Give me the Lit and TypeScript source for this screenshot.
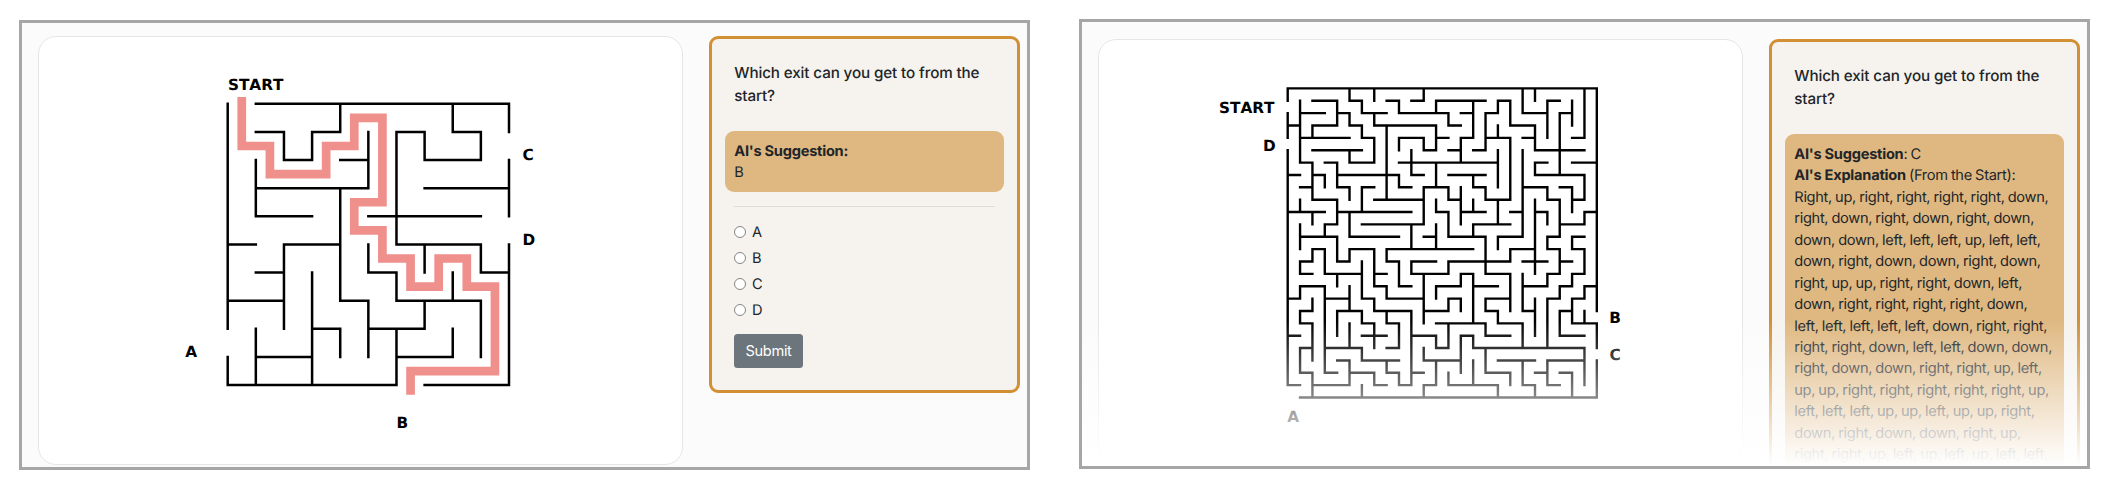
import { LitElement, html, css, svg, nothing } from "lit";
import { customElement, property } from "lit/decorators.js";

interface MazeLabel { text: string; x: number; y: number; }
interface MazeData {
  ox: number; oy: number; cell: number; stroke: number;
  // One entry per grid line; each lists "from-to" wall runs along that line.
  rows: string[]; cols: string[];
  labels: MazeLabel[];
  route?: [number, number][];
}

const smallMaze: MazeData = {
  ox: 188.7, oy: 66.8, cell: 28.13, stroke: 2.5,
  rows: [
    "1-10", "1-2 3-4 6-7 8-9", "2-3 4-5 7-9", "1-5 7-10", "1-3 5-9", "0-1 2-4 6-9",
    "1-2 5-6 9-10", "0-2 4-5 6-9", "3-4 5-7", "1-3 6-8", "0-6 7-10",
  ],
  cols: [
    "0-8 9-10", "2-4 8-10", "1-2 5-8", "1-2 6-10", "0-1 3-7 8-9", "1-3 5-6 7-9",
    "1-5 6-7 8-10", "1-2 5-6 7-8", "0-1 6-7 8-9", "1-2 5-6 7-9", "0-1 2-4 5-10",
  ],
  labels: [
    { text: "START", x: 188.9, y: 53 },
    { text: "C", x: 483.6, y: 123.3 },
    { text: "D", x: 483.4, y: 207.7 },
    { text: "B", x: 357.6, y: 390.7 },
    { text: "A", x: 146.2, y: 320 },
  ],
  route: [
    [0.5, -0.24], [0.5, 1.5], [1.5, 1.5], [1.5, 2.5], [3.5, 2.5], [3.5, 1.5], [4.5, 1.5], [4.5, 0.5],
    [5.5, 0.5], [5.5, 3.5], [4.5, 3.5], [4.5, 4.5], [5.5, 4.5], [5.5, 5.5], [6.5, 5.5], [6.5, 6.5],
    [7.5, 6.5], [7.5, 5.5], [8.5, 5.5], [8.5, 6.5], [9.5, 6.5], [9.5, 9.5], [6.5, 9.5], [6.5, 10.34],
  ],
};

const largeMaze: MazeData = {
  ox: 188.7, oy: 48.4, cell: 12.365, stroke: 2.4,
  rows: [
    "0-25",
    "2-4 5-6 8-9 10-11 12-16 17-18 21-22",
    "1-3 4-5 6-8 9-13 14-15 16-17 19-21 22-23",
    "0-1 2-4 5-6 7-12 13-14 18-20",
    "1-5 6-7 9-11 12-13 14-15 16-18 19-20 23-24",
    "2-6 11-12 13-14 15-16 20-24",
    "1-2 3-4 5-7 9-17 20-21 23-25",
    "0-1 2-3 4-9 10-11 13-16 20-24",
    "1-2 4-5 6-7 9-10 11-13 15-16 19-21 22-23",
    "2-4 7-11 13-14 16-18 21-22 23-24",
    "0-3 4-10 12-13 14-16 18-19 20-21 24-25",
    "3-4 6-11 15-18 22-24",
    "1-4 5-9 11-12 13-16 17-19 21-22 23-24",
    "2-3 5-7 8-15 18-20 21-22 23-24",
    "1-2 4-5 8-9 10-12 13-18 19-21 22-23",
    "1-2 3-6 7-8 10-13 14-15 16-18 21-22 23-24",
    "1-3 7-8 9-10 12-14 15-17 19-21 22-23 24-25",
    "0-1 3-5 6-7 8-11 13-14 16-18 21-22 23-24",
    "1-2 4-6 7-10 11-13 16-17 19-20 22-23",
    "1-2 6-7 8-9 12-16 17-19 23-25",
    "0-1 6-8 10-12 14-15 16-18 22-24",
    "1-2 3-6 8-9 12-13 15-24",
    "4-5 6-9 11-14 17-20 21-24",
    "1-2 3-4 5-7 8-9 10-11 16-18 20-21 22-23",
    "0-1 2-5 7-8 9-10 11-12 13-17 19-20 21-22",
    "1-25",
  ],
  cols: [
    "0-1 2-4 5-24",
    "1-6 9-10 11-13 14-15 16-17 18-19 21-23",
    "3-4 6-9 10-11 13-14 17-18 19-22 23-25",
    "7-8 11-12 13-15 16-23",
    "1-3 6-8 9-11 12-14 15-16 18-20",
    "0-1 2-3 5-6 8-9 10-12 13-14 16-18 19-21 22-24",
    "1-2 3-4 8-10 14-17 18-19 21-22 24-25",
    "0-1 2-3 4-6 13-16 17-18 19-21 23-24",
    "3-9 13-14 16-17 18-19 22-23",
    "1-2 4-5 7-8 14-16 19-21 23-24",
    "5-7 11-13 14-15 18-24",
    "0-1 4-5 8-11 15-19 21-22 24-25",
    "1-2 3-5 6-8 9-10 11-13 16-17 20-21 22-24",
    "2-3 8-9 10-12 14-15 17-18 19-21 23-24",
    "4-6 8-11 15-16 17-18 20-23",
    "1-4 7-8 9-10 11-12 15-19 20-21 22-24",
    "2-5 8-9 12-15 17-18 19-20 21-23",
    "1-2 3-4 5-8 9-11 12-13 18-19 24-25",
    "1-3 4-9 13-14 15-18 23-24",
    "0-2 5-12 15-18 19-21 22-24",
    "0-1 3-5 6-7 9-15 17-20 24-25",
    "1-4 8-9 10-11 12-13 15-16 17-21 22-24",
    "2-7 9-12 13-15 16-17 18-20",
    "1-3 8-10 12-13 15-16 17-19 23-25",
    "0-4 7-9 10-11 13-15 16-17 18-19 21-24",
    "0-18 19-21 22-25",
  ],
  labels: [
    { text: "START", x: 120.0, y: 73 },
    { text: "D", x: 163.9, y: 110.6 },
    { text: "B", x: 510.3, y: 283.1 },
    { text: "C", x: 510.6, y: 320.4 },
    { text: "A", x: 188.3, y: 382 },
  ],
};

@customElement("maze-board")
class MazeBoard extends LitElement {
  @property({ attribute: false }) maze!: MazeData;

  static styles = css`
    :host { display: block; }
    svg { display: block; width: 642px; height: 427px; }
    .wall { fill: none; stroke: #000; stroke-linecap: square; }
    .route { fill: none; stroke: #f0908c; stroke-width: 8.7; }
    .label { font: bold 15.3px "DejaVu Sans", sans-serif; fill: #000; font-kerning: none;
      text-rendering: geometricPrecision; }
  `;

  private wallPath(): string {
    const m = this.maze;
    const X = (v: number) => (m.ox + v * m.cell).toFixed(2);
    const Y = (v: number) => (m.oy + v * m.cell).toFixed(2);
    const runs = (line: string) => line.split(" ").map((r) => r.split("-").map(Number));
    let d = "";
    m.rows.forEach((line, j) => runs(line).forEach(([a, b]) => { d += `M${X(a)} ${Y(j)}H${X(b)}`; }));
    m.cols.forEach((line, i) => runs(line).forEach(([a, b]) => { d += `M${X(i)} ${Y(a)}V${Y(b)}`; }));
    return d;
  }

  render() {
    const m = this.maze;
    const pts = m.route?.map(([x, y]) => `${m.ox + x * m.cell},${m.oy + y * m.cell}`).join(" ");
    return html`<svg viewBox="0 0 642 427">
      <path class="wall" stroke-width=${m.stroke} d=${this.wallPath()}></path>
      ${pts ? svg`<polyline class="route" points=${pts}></polyline>` : nothing}
      ${m.labels.map((l) => svg`<text class="label" x=${l.x} y=${l.y}>${l.text}</text>`)}
    </svg>`;
  }
}

const explanation = [
  "Right, up, right, right, right, right, down,",
  "right, down, right, down, right, down,",
  "down, down, left, left, left, up, left, left,",
  "down, right, down, down, right, down,",
  "right, up, up, right, right, down, left,",
  "down, right, right, right, right, down,",
  "left, left, left, left, left, down, right, right,",
  "right, right, down, left, left, down, down,",
  "right, down, down, right, right, up, left,",
  "up, up, right, right, right, right, right, up,",
  "left, left, left, up, up, left, up, up, right,",
  "down, right, down, down, right, up,",
  "right, right, up, left, up, left, up, left, left,",
];

@customElement("app-root")
class AppRoot extends LitElement {
  static styles = css`
    :host { display: block; width: 2122px; height: 490px; background: #fff; overflow: hidden;
      font-family: Inter, sans-serif; color: #212529; text-rendering: geometricPrecision; }
    * { box-sizing: border-box; }
    .page { display: flex; gap: 49px; padding: 20px 0 0 19px; align-items: flex-start; }
    .frame { display: flex; gap: 26px; align-items: flex-start; width: 1011px; height: 450px; flex: none;
      border: 3px solid #a6a6a6; background: #fbfbfb; padding: 13px 0 0 16px; overflow: hidden; }
    .frame.faded { position: relative; margin-top: -1px; padding-top: 17px; }
    .faded::after { content: ""; position: absolute; inset: 298px 0 0 0;
      background: linear-gradient(rgba(255, 255, 255, 0), #fff); }
    .board { width: 645px; height: 429px; flex: none; border: 1px solid #e6e6e6; border-radius: 18px;
      background: #fff; overflow: hidden; }
    .faded .board { height: 423px; }
    .panel { width: 311px; height: 357px; flex: none; border: 3px solid #d29034; border-radius: 9px;
      background: #f6f3ee; padding: 22px 13px 0; }
    .faded .panel { height: 520px; }
    .question { margin: 0 0 24px; padding-left: 9.3px; font-size: 15.2px; font-weight: 500;
      line-height: 23px; letter-spacing: -0.11px; white-space: nowrap; }
    .advice { border-radius: 9px; background: #dfb881; padding: 10px 9px 8px 9.3px; height: 61px;
      font-size: 14.6px; line-height: 21.43px; white-space: nowrap; letter-spacing: -0.31px;
      word-spacing: -0.6px; }
    .advice b { letter-spacing: -0.24px; word-spacing: 0; }
    .faded .advice { height: 400px; }
    .rule { height: 1px; background: #dedbd9; margin: 14px 9px 12px; }
    .options { display: flex; flex-direction: column; padding-left: 9px; }
    .option { display: flex; align-items: center; gap: 6px; height: 26px; font-size: 14.6px; }
    .option input { appearance: none; width: 12px; height: 12px; margin: 0; border: 1px solid #858585;
      border-radius: 50%; background: #fff; }
    .submit { display: block; margin: 11px 0 0 9px; width: 69px; height: 34px; border: 0; padding: 0;
      border-radius: 3.5px; background: #6c757b; color: #fff; font: 14.6px Inter, sans-serif;
      letter-spacing: -0.3px; }
  `;

  render() {
    const question = html`<p class="question">Which exit can you get to from the<br />start?</p>`;
    return html`<div class="page">
      <section class="frame">
        <div class="board"><maze-board .maze=${smallMaze}></maze-board></div>
        <div class="panel">
          ${question}
          <div class="advice"><b>AI's Suggestion:</b><br />B</div>
          <div class="rule"></div>
          <div class="options">
            ${["A", "B", "C", "D"].map((o) => html`<label class="option"><input type="radio" name="exit" />${o}</label>`)}
          </div>
          <button class="submit">Submit</button>
        </div>
      </section>
      <section class="frame faded">
        <div class="board"><maze-board .maze=${largeMaze}></maze-board></div>
        <div class="panel">
          ${question}
          <div class="advice">
            <b>AI's Suggestion</b>: C<br /><b>AI's Explanation</b> (From the Start):<br />
            ${explanation.map((line) => html`${line}<br />`)}
          </div>
        </div>
      </section>
    </div>`;
  }
}
